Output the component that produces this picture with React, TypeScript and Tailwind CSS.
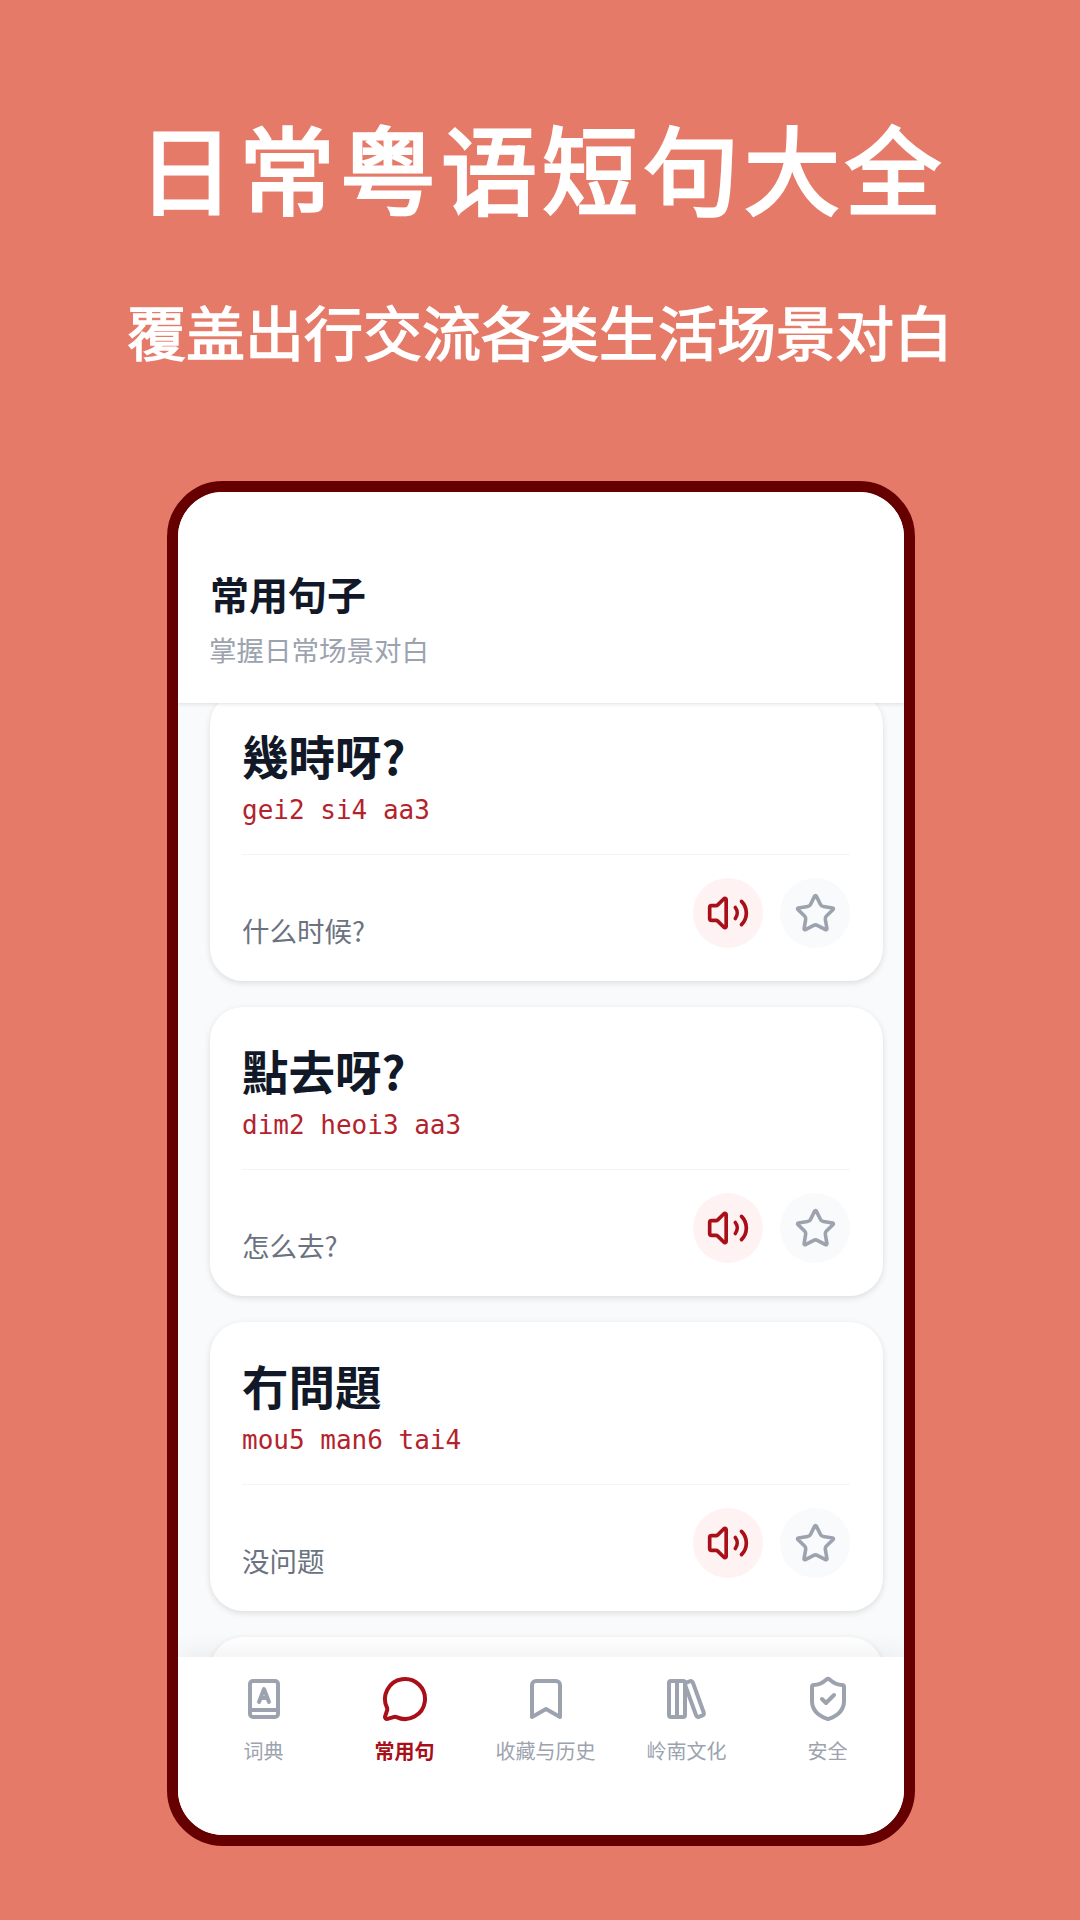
import { Volume2, Star, MessageCircle, Bookmark, LibraryBig, ShieldCheck } from 'lucide-react';

const CJK = "font-['Noto_Sans_CJK_SC','Noto_Sans',sans-serif]";

const PHRASES = [
  { id: 1, text: '幾時呀?', jyutping: 'gei2 si4 aa3', meaning: '什么时候?' },
  { id: 2, text: '點去呀?', jyutping: 'dim2 heoi3 aa3', meaning: '怎么去?' },
  { id: 3, text: '冇問題', jyutping: 'mou5 man6 tai4', meaning: '没问题' },
];

// lucide's book-a has a curved spine, the reference has a plain box with a shelf line
function DictIcon({ size }: { size: number }) {
  return (
    <svg width={size} height={size} viewBox="0 0 24 24" fill="none" stroke="currentColor" strokeWidth={2} strokeLinecap="round" strokeLinejoin="round">
      <rect x="5" y="3" width="14" height="18" rx="1.5" />
      <path d="M5 17.5h14" />
      <path d="M9.5 13.5l2.5-6.5 2.5 6.5" />
      <path d="M10.5 11.5h3" />
    </svg>
  );
}

const TABS = [
  { label: '词典', icon: DictIcon },
  { label: '常用句', icon: MessageCircle, active: true },
  { label: '收藏与历史', icon: Bookmark },
  { label: '岭南文化', icon: LibraryBig },
  { label: '安全', icon: ShieldCheck },
];

function PhraseCard({ text, jyutping, meaning }: { text: string; jyutping: string; meaning: string }) {
  return (
    <div className="h-[289px] shrink-0 rounded-[33px] bg-white pt-[33px] pr-[33px] pl-[32px] shadow-[0_2px_6px_rgba(0,0,0,0.12)] first:mt-[-11px]">
      <div className="text-[46.5px] leading-[60px] font-bold text-[#111827]">{text}</div>
      <div className="mt-[8px] font-['DejaVu_Sans_Mono',monospace] text-[26px] leading-[34px] text-[#b4232c]">{jyutping}</div>
      <div className="mt-[27px] h-px bg-[#f3f4f6]" />
      <div className="mt-[23px] flex items-end justify-between">
        <div className="text-[27.5px] leading-[36px] text-[#6b7280]">{meaning}</div>
        <div className="flex gap-[17px]">
          <button className="flex h-[70px] w-[70px] items-center justify-center rounded-full bg-[#fef2f2] text-[#a80f18]">
            <Volume2 size={44} strokeWidth={2} />
          </button>
          <button className="flex h-[70px] w-[70px] items-center justify-center rounded-full bg-[#f9fafb] text-[#9ca3af]">
            <Star size={43} strokeWidth={2} />
          </button>
        </div>
      </div>
    </div>
  );
}

export default function App() {
  return (
    <div className={`flex h-[1920px] w-[1080px] flex-col items-center overflow-hidden bg-[#e67a68] ${CJK}`}>
      <h1 className="mt-[104px] ml-[4px] text-[96px] leading-[124px] font-normal tracking-[5px] text-white [-webkit-text-stroke:3px_white]">日常粤语短句大全</h1>
      <p className="mt-[63px] text-[59px] leading-[80px] font-normal text-white [-webkit-text-stroke:1.5px_white]">覆盖出行交流各类生活场景对白</p>

      <div className="mt-[110px] ml-[2px] flex h-[1365px] w-[748px] flex-col overflow-hidden rounded-[56px] border-[11px] border-[#660000] bg-white">
        <header className="relative z-10 h-[211px] shrink-0 bg-white px-[32px] pt-[80px] shadow-[0_1px_4px_rgba(0,0,0,0.12)]">
          <div className="text-[39px] leading-[42px] font-bold text-[#111827]">常用句子</div>
          <div className="mt-[16px] ml-[-1px] text-[27.5px] leading-[38px] text-[#9ca3af]">掌握日常场景对白</div>
        </header>

        <div className="flex min-h-0 flex-1 flex-col gap-[26px] overflow-hidden bg-[#f9fafb] pr-[21px] pl-[32px]">
          {PHRASES.map(p => (
            <PhraseCard key={p.id} text={p.text} jyutping={p.jyutping} meaning={p.meaning} />
          ))}
          <div className="h-[100px] shrink-0 rounded-[33px] bg-white shadow-[0_2px_6px_rgba(0,0,0,0.12)]" />
        </div>

        <nav className="relative z-10 grid h-[178px] shrink-0 grid-cols-[repeat(5,141px)] bg-white pt-[18px] pl-[15px] shadow-[0_-8px_20px_rgba(0,0,0,0.05)]">
          {TABS.map(tab => {
            const Icon = tab.icon;
            return (
              <div key={tab.label} className={`flex flex-col items-center ${tab.active ? 'text-[#a80f18]' : 'text-[#9ca3af]'}`}>
                <Icon size={48} />
                <span className={`mt-[14px] text-[20px] leading-[28px] ${tab.active ? 'font-bold' : ''}`}>{tab.label}</span>
              </div>
            );
          })}
        </nav>
      </div>
    </div>
  );
}
